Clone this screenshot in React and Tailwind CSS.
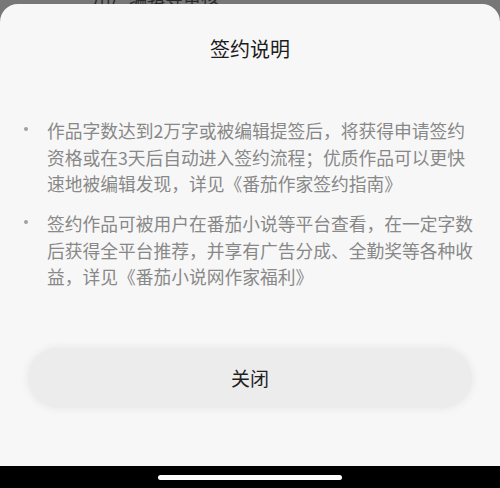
import React from 'react'

const items = [
    '作品字数达到2万字或被编辑提签后，将获得申请签约资格或在3天后自动进入签约流程；优质作品可以更快速地被编辑发现，详见《番茄作家签约指南》',
    '签约作品可被用户在番茄小说等平台查看，在一定字数后获得全平台推荐，并享有广告分成、全勤奖等各种收益，详见《番茄小说网作家福利》',
]

export default function App() {
    return (
        <div
            className="w-[500px] h-[488px] flex flex-col bg-[#777777] overflow-hidden"
            style={{ fontFamily: '"Noto Sans CJK SC", "Noto Sans", sans-serif' }}
        >
            {/* page behind the sheet, mostly hidden */}
            <div className="h-[4px] overflow-hidden pl-[93px]">
                <div className="-mt-[14px] text-[18px] leading-[20px] text-[#2a2a2a]">用户编辑等审核</div>
            </div>

            {/* bottom sheet */}
            <div className="flex-1 flex flex-col bg-[#f7f7f7] rounded-t-[18px]">
                <h2 className="pt-[31px] text-center text-[20px] leading-[28px] text-[#1c1c1c]">签约说明</h2>

                <ul className="mt-[54px] pl-[24px] pr-[22px] flex flex-col gap-[13.5px]">
                    {items.map((t, i) => (
                        <li key={i} className="flex text-[17.75px] leading-[26.5px] text-[#888888]">
                            <span className="w-[23px] shrink-0 pt-[10px]">
                                <span className="block w-[3.5px] h-[3.5px] rounded-full bg-[#a0a0a0]" />
                            </span>
                            <span>{t}</span>
                        </li>
                    ))}
                </ul>

                <div className="mt-auto mb-[58px] px-[28px]">
                    <button className="w-full h-[60px] rounded-full bg-[#ececec] shadow-[0_0_6px_2px_#ececec] text-[19px] text-[#1f1f1f]">
                        关闭
                    </button>
                </div>
            </div>

            {/* system nav bar */}
            <div className="h-[22px] bg-black flex items-center justify-center">
                <div className="w-[184px] h-[5px] rounded-full bg-white" />
            </div>
        </div>
    )
}
